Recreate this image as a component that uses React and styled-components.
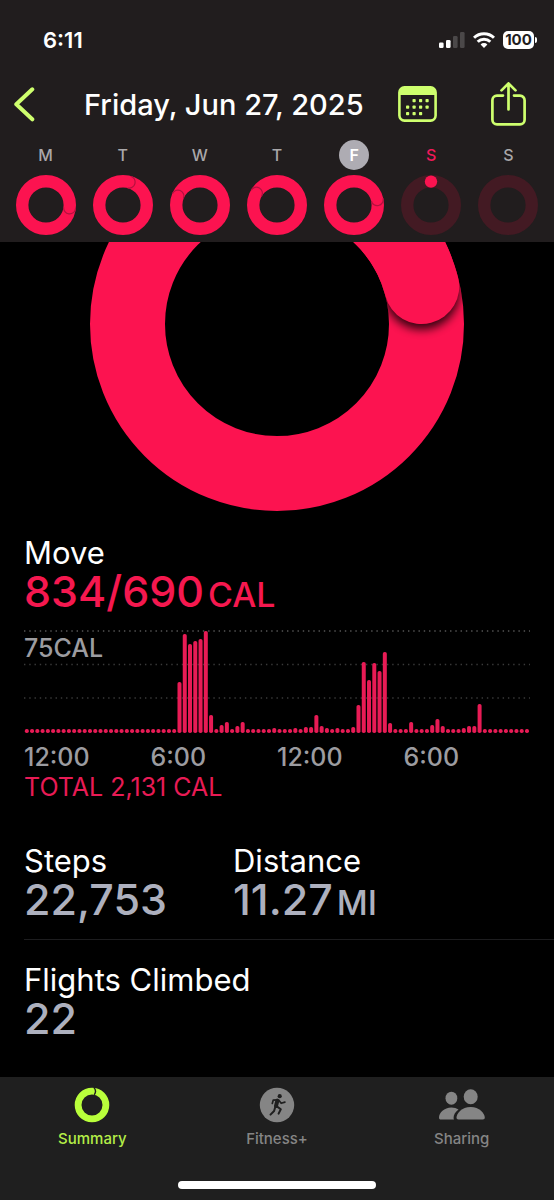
import styled, { createGlobalStyle } from "styled-components";

const PINK = "#fc1350";
const LIME = "#ceff6e";

const DAYS = [
  { id: "mon", letter: "M", name: "Monday", angle: 97 },
  { id: "tue", letter: "T", name: "Tuesday", angle: 15 },
  { id: "wed", letter: "W", name: "Wednesday", angle: 292 },
  { id: "thu", letter: "T", name: "Thursday", angle: 300 },
  { id: "fri", letter: "F", name: "Friday", angle: 77, selected: true },
  { id: "sat", letter: "S", name: "Saturday", today: true, started: true },
  { id: "sun", letter: "S", name: "Sunday" },
];

// one value per quarter hour, 4 is the resting minimum
const CALORIES = [
  ...Array(29).fill(4),
  51, 99, 89, 92, 94, 102, 18, 4, 8, 11, 4, 7, 11, 4, 4, 4, 4, 4, 5, 4, 4, 4,
  5, 4, 6, 6, 18, 7, 5, 4, 5, 4, 4, 6, 28, 71, 53, 70, 62, 81, 10, 4, 4, 4, 11,
  4, 4, 4, 8, 14, 7, 4, 4, 4, 5, 7, 7, 29,
  ...Array(9).fill(4),
];

const HOURS = ["12:00", "6:00", "12:00", "6:00"];

function pointOn(angle, radius, center) {
  const rad = (angle * Math.PI) / 180;
  return [
    center + radius * Math.sin(rad),
    center - radius * Math.cos(rad),
  ];
}

function DayRing({ day }) {
  if (!day.angle) {
    return (
      <RingSvg viewBox="0 0 60 60" aria-hidden="true">
        <circle cx="30" cy="30" r="23.8" fill="none" stroke="#431a23" strokeWidth="12.4" />
        {day.started && <circle cx="30" cy="6.6" r="6.2" fill={PINK} />}
      </RingSvg>
    );
  }
  const [x, y] = pointOn(day.angle, 23.8, 30);
  return (
    <RingSvg viewBox="0 0 60 60" aria-hidden="true">
      <circle cx="30" cy="30" r="23.8" fill="none" stroke={PINK} strokeWidth="12.4" />
      <g transform={`translate(${x} ${y}) rotate(${day.angle})`}>
        <path d="M0 -6A6 6 0 0 1 0 6" fill="none" stroke="#b3113f" strokeWidth="1.2" />
      </g>
    </RingSvg>
  );
}

function MoveRing() {
  const [x, y] = pointOn(75.5, 149.5, 187);
  return (
    <BigRing viewBox="0 0 374 374" role="img" aria-label="Move ring, 121 percent">
      <defs>
        <filter id="soft" x="-50%" y="-50%" width="200%" height="200%">
          <feGaussianBlur stdDeviation="5" />
        </filter>
        <clipPath id="band">
          <path
            clipRule="evenodd"
            d="M187 0a187 187 0 1 0 0 374a187 187 0 1 0 0 -374zM187 75a112 112 0 1 1 0 224a112 112 0 1 1 0 -224z"
          />
        </clipPath>
      </defs>
      <circle cx="187" cy="187" r="149.5" fill="none" stroke={PINK} strokeWidth="75" />
      <g clipPath="url(#band)">
        <circle cx={x} cy={y + 5} r="38" fill="#000" opacity="0.8" filter="url(#soft)" />
      </g>
      <path
        d={`M187 37.5A149.5 149.5 0 0 1 ${x} ${y}`}
        fill="none"
        stroke={PINK}
        strokeWidth="75"
        strokeLinecap="round"
      />
    </BigRing>
  );
}

function CaloriesChart() {
  return (
    <ChartSvg viewBox="0 0 506 104" role="img" aria-label="Calories by time of day">
      {[1, 34.5, 68].map((y, i) => (
        <line
          key={y}
          x1="0"
          x2="506"
          y1={y}
          y2={y}
          stroke={i === 0 ? "#555" : "#3a3a3a"}
          strokeWidth="1.4"
          strokeDasharray="1.4 3.86"
        />
      ))}
      {CALORIES.map((value, i) => (
        <rect
          key={i}
          x={0.8 + i * 5.265}
          y={103 - value}
          width="4"
          height={value}
          rx="1.8"
          fill="#e81b55"
        />
      ))}
    </ChartSvg>
  );
}

function SignalIcon() {
  return (
    <svg width="26" height="18" viewBox="0 0 26 18" aria-hidden="true">
      <rect x="0" y="11.5" width="4.6" height="5.5" rx="1.3" fill="#fff" />
      <rect x="7" y="9" width="4.6" height="8" rx="1.3" fill="#fff" />
      <rect x="14" y="5" width="4.6" height="12" rx="1.3" fill="#4b4849" />
      <rect x="21" y="1" width="4.6" height="16" rx="1.3" fill="#4b4849" />
    </svg>
  );
}

function WifiIcon() {
  return (
    <svg width="22" height="18" viewBox="0 0 22 18" fill="none" stroke="#fff" strokeWidth="3" aria-hidden="true">
      <path d="M1 6.8A14.3 14.3 0 0 1 21 6.8" />
      <path d="M4.7 10.7A9 9 0 0 1 17.3 10.7" />
      <path d="M11 17l-3.4-3.5a4.8 4.8 0 0 1 6.8 0z" fill="#fff" stroke="none" />
    </svg>
  );
}

function CalendarIcon() {
  const dots = [
    [16, 14.5], [22.5, 14.5], [29, 14.5],
    [9.5, 21], [16, 21], [22.5, 21], [29, 21],
    [9.5, 27.5], [16, 27.5], [22.5, 27.5],
  ];
  return (
    <svg width="39" height="36" viewBox="0 0 39 36" aria-hidden="true">
      <rect x="1.4" y="1.4" width="36.2" height="33.2" rx="5" fill="none" stroke={LIME} strokeWidth="2.6" />
      <path d="M1 9V6a5 5 0 0 1 5-5h27a5 5 0 0 1 5 5v3z" fill={LIME} />
      {dots.map(([x, y]) => (
        <rect key={`${x}-${y}`} x={x - 1.5} y={y - 1.5} width="3.2" height="3.2" rx="0.8" fill={LIME} />
      ))}
    </svg>
  );
}

function ShareIcon() {
  return (
    <svg
      width="35"
      height="44"
      viewBox="0 0 35 44"
      fill="none"
      stroke={LIME}
      strokeWidth="2.7"
      strokeLinecap="round"
      strokeLinejoin="round"
      aria-hidden="true"
    >
      <path d="M12 13.6H6a4.6 4.6 0 0 0-4.6 4.6v19.6A4.6 4.6 0 0 0 6 42.4h23a4.6 4.6 0 0 0 4.6-4.6V18.2a4.6 4.6 0 0 0-4.6-4.6h-6" />
      <path d="M17.5 27.5V1.6M10.5 8.4l7-7 7 7" />
    </svg>
  );
}

function SummaryIcon() {
  return (
    <svg width="36" height="36" viewBox="0 0 36 36" fill="none" aria-hidden="true">
      <circle cx="18" cy="18" r="13.9" stroke="#b9ff3b" strokeWidth="6.8" />
      <path d="M19.8 .4c2.2 2.4 2.2 5 .4 7.4" stroke="#1f1f1f" strokeWidth="1.4" />
    </svg>
  );
}

function FitnessIcon() {
  return (
    <svg width="36" height="36" viewBox="0 0 36 36" fill="none" aria-hidden="true">
      <circle cx="18" cy="18" r="17.2" fill="#858585" />
      <circle cx="20.7" cy="9.2" r="2.1" fill="#1f1f1f" />
      <g stroke="#1f1f1f" strokeLinecap="round" strokeLinejoin="round">
        <path d="M18.4 13.6l-1.4 5.4" strokeWidth="4" />
        <path d="M18.6 12.8l-4.4.4-.9 3.2M20 13.4l2.2 2.9 3.7-1.2" strokeWidth="1.7" />
        <path d="M17.8 19.4l4 2.8-2.2 4.4M16.3 19.8l-1.2 4.2-3.6 3.6" strokeWidth="2" />
      </g>
    </svg>
  );
}

function SharingIcon() {
  return (
    <svg width="46" height="36" viewBox="0 0 46 36" fill="#858585" aria-hidden="true">
      <ellipse cx="12.4" cy="11.2" rx="5.9" ry="6.5" />
      <path d="M2 32.6c-1.4 0-2-.8-2-2.2 0-4.5 5.2-10 12.4-10 2.8 0 5.2.8 7.1 2.1-3.3 2.4-5 5.7-4.9 8.3 0 .7.1 1.3.4 1.8z" />
      <ellipse cx="31.7" cy="9.7" rx="7" ry="7.5" />
      <path d="M19.5 32.6c-1.4 0-2-.8-2-2 0-4.4 5.3-10.7 14.1-10.7s14.2 6.3 14.2 10.7c0 1.2-.6 2-2 2z" />
    </svg>
  );
}

function Header() {
  return (
    <TopBar>
      <StatusBar>
        <Clock>6:11</Clock>
        <StatusIcons>
          <SignalIcon />
          <WifiIcon />
          <Battery>
            <BatteryLevel>100</BatteryLevel>
            <BatteryTip />
          </Battery>
        </StatusIcons>
      </StatusBar>
      <TitleRow>
        <IconButton aria-label="Back">
          <svg width="21" height="36" viewBox="0 0 21 36" fill="none" aria-hidden="true">
            <path d="M18.3 3.3L2.3 18.3l16 15" stroke={LIME} strokeWidth="4" strokeLinecap="round" strokeLinejoin="round" />
          </svg>
        </IconButton>
        <Title>Friday, Jun 27, 2025</Title>
        <Actions>
          <IconButton aria-label="Open calendar">
            <CalendarIcon />
          </IconButton>
          <IconButton aria-label="Share">
            <ShareIcon />
          </IconButton>
        </Actions>
      </TitleRow>
      <Week>
        {DAYS.map((day) => (
          <DayButton key={day.id} aria-label={day.name} aria-pressed={!!day.selected}>
            <DayLetter $selected={day.selected} $today={day.today}>
              {day.letter}
            </DayLetter>
            <DayRing day={day} />
          </DayButton>
        ))}
      </Week>
    </TopBar>
  );
}

function App() {
  return (
    <Page>
      <GlobalStyle />
      <Header />
      <Main>
        <RingWindow>
          <MoveRing />
        </RingWindow>
        <MoveSection>
          <Label>Move</Label>
          <Value $move>
            834/690<Unit>CAL</Unit>
          </Value>
          <Chart>
            <ChartMax>75CAL</ChartMax>
            <CaloriesChart />
          </Chart>
          <Hours>
            {HOURS.map((hour, i) => (
              <span key={i}>{hour}</span>
            ))}
          </Hours>
          <Total>TOTAL 2,131 CAL</Total>
        </MoveSection>
        <Stats>
          <StatRow>
            <div>
              <Label>Steps</Label>
              <Value>22,753</Value>
            </div>
            <div>
              <Label>Distance</Label>
              <Value>
                11.27<Unit>MI</Unit>
              </Value>
            </div>
          </StatRow>
          <StatRow>
            <StatWide>
              <Label>Flights Climbed</Label>
              <Value>22</Value>
            </StatWide>
          </StatRow>
        </Stats>
      </Main>
      <BottomBar>
        <Tabs>
          <Tab href="#summary" $active>
            <SummaryIcon />
            Summary
          </Tab>
          <Tab href="#fitness">
            <FitnessIcon />
            Fitness+
          </Tab>
          <Tab href="#sharing">
            <SharingIcon />
            Sharing
          </Tab>
        </Tabs>
        <HomeIndicator />
      </BottomBar>
    </Page>
  );
}

export default App;

const GlobalStyle = createGlobalStyle`
  * {
    box-sizing: border-box;
  }
  body {
    margin: 0;
    background: #000;
    color: #fff;
    font-family: Inter, "Liberation Sans", sans-serif;
  }
  button {
    font: inherit;
    color: inherit;
    background: none;
    border: 0;
    padding: 0;
    cursor: pointer;
  }
`;
const Page = styled.div`
  min-height: 100vh;
  display: flex;
  flex-direction: column;
`;
const TopBar = styled.header`
  background: #211d1e;
  padding-bottom: 7px;
`;
const StatusBar = styled.div`
  display: flex;
  justify-content: space-between;
  align-items: center;
  height: 80px;
  padding: 0 17px 0 43px;
`;
const Clock = styled.span`
  font-size: 22px;
  font-weight: 600;
`;
const StatusIcons = styled.div`
  display: flex;
  align-items: center;
  gap: 8px;
`;
const Battery = styled.div`
  display: flex;
  align-items: center;
  gap: 1px;
`;
const BatteryLevel = styled.span`
  width: 31px;
  height: 18px;
  border-radius: 5px;
  background: #fff;
  color: #211d1e;
  font-size: 15px;
  font-weight: 700;
  line-height: 18px;
  text-align: center;
`;
const BatteryTip = styled.span`
  width: 2px;
  height: 6px;
  border-radius: 0 2px 2px 0;
  background: #fff;
`;
const TitleRow = styled.div`
  display: flex;
  align-items: center;
  height: 48px;
  padding: 0 28px 0 14px;
`;
const IconButton = styled.button`
  display: flex;
`;
const Title = styled.h1`
  flex: 1;
  margin: 0;
  padding-left: 49px;
  font-size: 29px;
  font-weight: 500;
  white-space: nowrap;
`;
const Actions = styled.div`
  display: flex;
  align-items: center;
  gap: 54px;
`;
const Week = styled.div`
  display: grid;
  grid-template-columns: repeat(7, 1fr);
  padding: 12px 7px 0;
`;
const DayButton = styled.button`
  display: flex;
  flex-direction: column;
  align-items: center;
  gap: 5px;
`;
const DayLetter = styled.span`
  width: 30px;
  height: 30px;
  border-radius: 50%;
  background: ${(p) => (p.$selected ? "#aeacb3" : "transparent")};
  color: ${(p) => (p.$selected ? "#fff" : p.$today ? "#f0195a" : "#aaa8aa")};
  font-size: 16px;
  font-weight: ${(p) => (p.$selected ? 600 : 500)};
  line-height: 30px;
  text-align: center;
`;
const RingSvg = styled.svg`
  width: 60px;
  height: 60px;
`;
const Main = styled.main`
  flex: 1;
`;
const RingWindow = styled.div`
  height: 269px;
  overflow: hidden;
  display: flex;
  justify-content: center;
  align-items: flex-end;
`;
const BigRing = styled.svg`
  flex: none;
  width: 374px;
  height: 374px;
`;
const MoveSection = styled.section`
  padding: 22px 24px 0;
`;
const Label = styled.h2`
  margin: 0;
  font-size: 31px;
  font-weight: 400;
  line-height: 40px;
`;
const Value = styled.p`
  margin: 0;
  color: ${(p) => (p.$move ? "#f5184f" : "#adb0be")};
  font-size: 43px;
  font-weight: 500;
  line-height: 36px;
`;
const Unit = styled.span`
  margin-left: 4px;
  font-size: 34px;
  line-height: 1;
`;
const Chart = styled.div`
  position: relative;
  margin-top: 18px;
`;
const ChartSvg = styled.svg`
  display: block;
  width: 100%;
`;
const ChartMax = styled.span`
  position: absolute;
  top: 3px;
  left: 0;
  color: #9c9ca0;
  font-size: 25px;
  font-weight: 500;
  line-height: 30px;
`;
const Hours = styled.div`
  display: grid;
  grid-template-columns: repeat(4, 1fr);
  margin-top: 8px;
  color: #9c9ca0;
  font-size: 25px;
  font-weight: 500;
  line-height: 30px;
`;
const Total = styled.p`
  margin: 0;
  color: #e81b55;
  font-size: 25px;
  line-height: 30px;
`;
const Stats = styled.section`
  padding-left: 24px;
`;
const StatRow = styled.div`
  display: grid;
  grid-template-columns: 209px 1fr;
  padding: 20px 0;

  &:first-child {
    padding: 39px 0 19px;
    border-bottom: 1px solid #1d1d1f;
  }
`;
const StatWide = styled.div`
  grid-column: 1 / -1;
`;
const BottomBar = styled.footer`
  background: #1f1f1f;
  padding: 10px 0 11px;
`;
const Tabs = styled.nav`
  display: grid;
  grid-template-columns: repeat(3, 1fr);
`;
const Tab = styled.a`
  display: flex;
  flex-direction: column;
  align-items: center;
  gap: 6px;
  color: ${(p) => (p.$active ? "#b4ee47" : "#858585")};
  font-size: 15px;
  font-weight: 500;
  line-height: 20px;
  text-decoration: none;
`;
const HomeIndicator = styled.div`
  width: 198px;
  height: 8px;
  margin: 32px auto 0;
  border-radius: 4px;
  background: #fff;
`;
